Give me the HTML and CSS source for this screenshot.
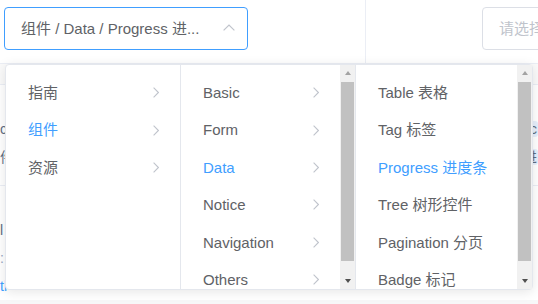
FILE: index.html
```html
<!DOCTYPE html>
<html lang="zh-CN">

<head>
    <meta charset="UTF-8">
    <meta name="viewport" content="width=device-width, initial-scale=1.0">
    <title>Cascader 级联选择器</title>
    <link rel="stylesheet" href="styles.css">
</head>

<body>

    <div class="page">
        <!-- 示例区域 -->
        <div class="demo">
            <div class="demo-half demo-left">
                <div class="cascader is-focus">
                    <span class="cascader-label">组件 / Data / Progress 进...</span>
                    <svg class="arrow-up" width="12" height="7" viewBox="0 0 12 7">
                        <path d="M0.6 6.4 L6 1 L11.4 6.4" />
                    </svg>
                </div>
            </div>
            <div class="demo-half demo-right">
                <div class="cascader">
                    <span class="placeholder">请选择</span>
                </div>
            </div>
        </div>

        <!-- 下面的文档内容（被下拉层遮住） -->
        <div class="doc">
            <div class="doc-head"></div>
            <div class="doc-row row-1">
                <span class="doc-left">c</span>
                <span class="doc-right code">c</span>
            </div>
            <div class="doc-row row-2">
                <span class="doc-left">件</span>
                <span class="doc-right code">进</span>
            </div>
            <div class="doc-rule"></div>
            <div class="doc-row row-3">
                <span class="doc-left">l</span>
            </div>
            <div class="doc-row row-4">
                <span class="doc-left muted">:</span>
            </div>
            <div class="doc-row row-5">
                <span class="doc-left link">tl</span>
            </div>
            <div class="doc-foot"></div>
        </div>

        <!-- 级联下拉面板 -->
        <div class="cascader-panel">
            <div class="menu">
                <ul class="menu-list">
                    <li class="node">指南<svg class="postfix" width="6" height="11" viewBox="0 0 6 11"><path d="M0.6 0.6 L5.4 5.5 L0.6 10.4" /></svg></li>
                    <li class="node is-active">组件<svg class="postfix" width="6" height="11" viewBox="0 0 6 11"><path d="M0.6 0.6 L5.4 5.5 L0.6 10.4" /></svg></li>
                    <li class="node">资源<svg class="postfix" width="6" height="11" viewBox="0 0 6 11"><path d="M0.6 0.6 L5.4 5.5 L0.6 10.4" /></svg></li>
                </ul>
            </div>
            <div class="menu">
                <ul class="menu-list">
                    <li class="node">Basic<svg class="postfix" width="6" height="11" viewBox="0 0 6 11"><path d="M0.6 0.6 L5.4 5.5 L0.6 10.4" /></svg></li>
                    <li class="node">Form<svg class="postfix" width="6" height="11" viewBox="0 0 6 11"><path d="M0.6 0.6 L5.4 5.5 L0.6 10.4" /></svg></li>
                    <li class="node is-active">Data<svg class="postfix" width="6" height="11" viewBox="0 0 6 11"><path d="M0.6 0.6 L5.4 5.5 L0.6 10.4" /></svg></li>
                    <li class="node">Notice<svg class="postfix" width="6" height="11" viewBox="0 0 6 11"><path d="M0.6 0.6 L5.4 5.5 L0.6 10.4" /></svg></li>
                    <li class="node">Navigation<svg class="postfix" width="6" height="11" viewBox="0 0 6 11"><path d="M0.6 0.6 L5.4 5.5 L0.6 10.4" /></svg></li>
                    <li class="node">Others<svg class="postfix" width="6" height="11" viewBox="0 0 6 11"><path d="M0.6 0.6 L5.4 5.5 L0.6 10.4" /></svg></li>
                </ul>
                <div class="scrollbar">
                    <div class="sb-btn"><span class="tri-up"></span></div>
                    <div class="sb-track"><div class="sb-thumb"></div></div>
                    <div class="sb-btn"><span class="tri-down"></span></div>
                </div>
            </div>
            <div class="menu menu-last">
                <ul class="menu-list">
                    <li class="node">Table 表格</li>
                    <li class="node">Tag 标签</li>
                    <li class="node is-active">Progress 进度条</li>
                    <li class="node">Tree 树形控件</li>
                    <li class="node">Pagination 分页</li>
                    <li class="node">Badge 标记</li>
                </ul>
                <div class="scrollbar">
                    <div class="sb-btn"><span class="tri-up"></span></div>
                    <div class="sb-track"><div class="sb-thumb"></div></div>
                    <div class="sb-btn"><span class="tri-down"></span></div>
                </div>
            </div>
        </div>
    </div>

</body>

</html>
```

FILE: styles.css
```css
body {
    margin: 0;
    padding: 0;
    font-family: 'Liberation Sans', 'Noto Sans CJK SC', sans-serif;
    font-size: 15px;
    color: #606266;
    background-color: #fff;
    overflow: hidden;
}

.page {
    position: relative;
    width: 538px;
    height: 304px;
    overflow: hidden;
}

/* 示例区域 */
.demo {
    display: flex;
    height: 63px;
    border-bottom: 1px solid #ebeef5;
}

.demo-half {
    box-sizing: border-box;
    padding-top: 7px;
}

.demo-left {
    flex-shrink: 0;
    width: 366px;
    padding-left: 4px;
    border-right: 1px solid #ebeef5;
}

.demo-right {
    flex: 1;
    min-width: 0;
    overflow: hidden;
    padding-left: 116px;
}

.cascader {
    box-sizing: border-box;
    display: flex;
    align-items: center;
    flex-shrink: 0;
    height: 43px;
    width: 244px;
    padding: 0 12px 0 16px;
    border: 1px solid #dcdfe6;
    border-radius: 4px;
    line-height: 41px;
    white-space: nowrap;
}

.cascader.is-focus {
    border-color: #409eff;
}

.cascader-label {
    flex: 1;
    overflow: hidden;
}

.arrow-up {
    margin-bottom: 2px;
}

.arrow-up path {
    fill: none;
    stroke: #c0c4cc;
    stroke-width: 1.2;
}

.placeholder {
    color: #c0c4cc;
}

/* 下面的文档 */
.doc-head {
    height: 20px;
    border-bottom: 1px solid #ebeef5;
    background-color: #fafafa;
}

.doc-row {
    display: flex;
    justify-content: space-between;
    height: 28px;
    line-height: 28px;
    font-size: 14px;
    color: #5e6d82;
}

.row-1 {
    margin-top: 30px;
}

.code {
    background-color: #e6effb;
    color: #5e6d82;
    padding: 0 1px;
    line-height: 16px;
    height: 16px;
    align-self: center;
    border-radius: 3px;
}

.doc-rule {
    margin-top: 14px;
    border-top: 1px solid #ebeef5;
}

.row-3 {
    margin-top: 30px;
}

.muted {
    color: #99a9bf;
}

.link {
    color: #409eff;
}

.doc-foot {
    height: 20px;
    background-color: #f7f7f8;
}

/* 级联下拉面板 */
.cascader-panel {
    position: absolute;
    left: 5px;
    top: 64px;
    display: flex;
    height: 224px;
    background-color: #fff;
    border: 1px solid #e4e7ed;
    border-radius: 4px;
    box-shadow: 0 2px 12px 0 rgba(0, 0, 0, 0.1);
}

.menu {
    box-sizing: border-box;
    display: flex;
    width: 175px;
    height: 224px;
    border-right: 1px solid #e4e7ed;
    overflow: hidden;
}

.menu-last {
    width: 176px;
    border-right: none;
}

.menu-list {
    flex: 1;
    margin: 0;
    padding: 9px 0 0 0;
    list-style: none;
}

.node {
    display: flex;
    align-items: center;
    justify-content: space-between;
    height: 37.4px;
    line-height: 37.4px;
    padding: 0 21px 0 22px;
    white-space: nowrap;
}

.node.is-active {
    color: #409eff;
}

.postfix path {
    fill: none;
    stroke: #c0c4cc;
    stroke-width: 1.1;
}

/* 滚动条 */
.scrollbar {
    display: flex;
    flex-direction: column;
    width: 15px;
    background-color: #f1f1f1;
}

.sb-btn {
    display: flex;
    align-items: center;
    justify-content: center;
    height: 16px;
}

.sb-track {
    flex: 1;
    padding-top: 1px;
}

.sb-thumb {
    height: 179px;
    margin: 0 1px;
    background-color: #c1c1c1;
}

.tri-up,
.tri-down {
    width: 0;
    height: 0;
    border-left: 3.5px solid transparent;
    border-right: 3.5px solid transparent;
}

.tri-up {
    border-bottom: 4px solid #a3a3a3;
}

.tri-down {
    border-top: 4px solid #505050;
}
```
